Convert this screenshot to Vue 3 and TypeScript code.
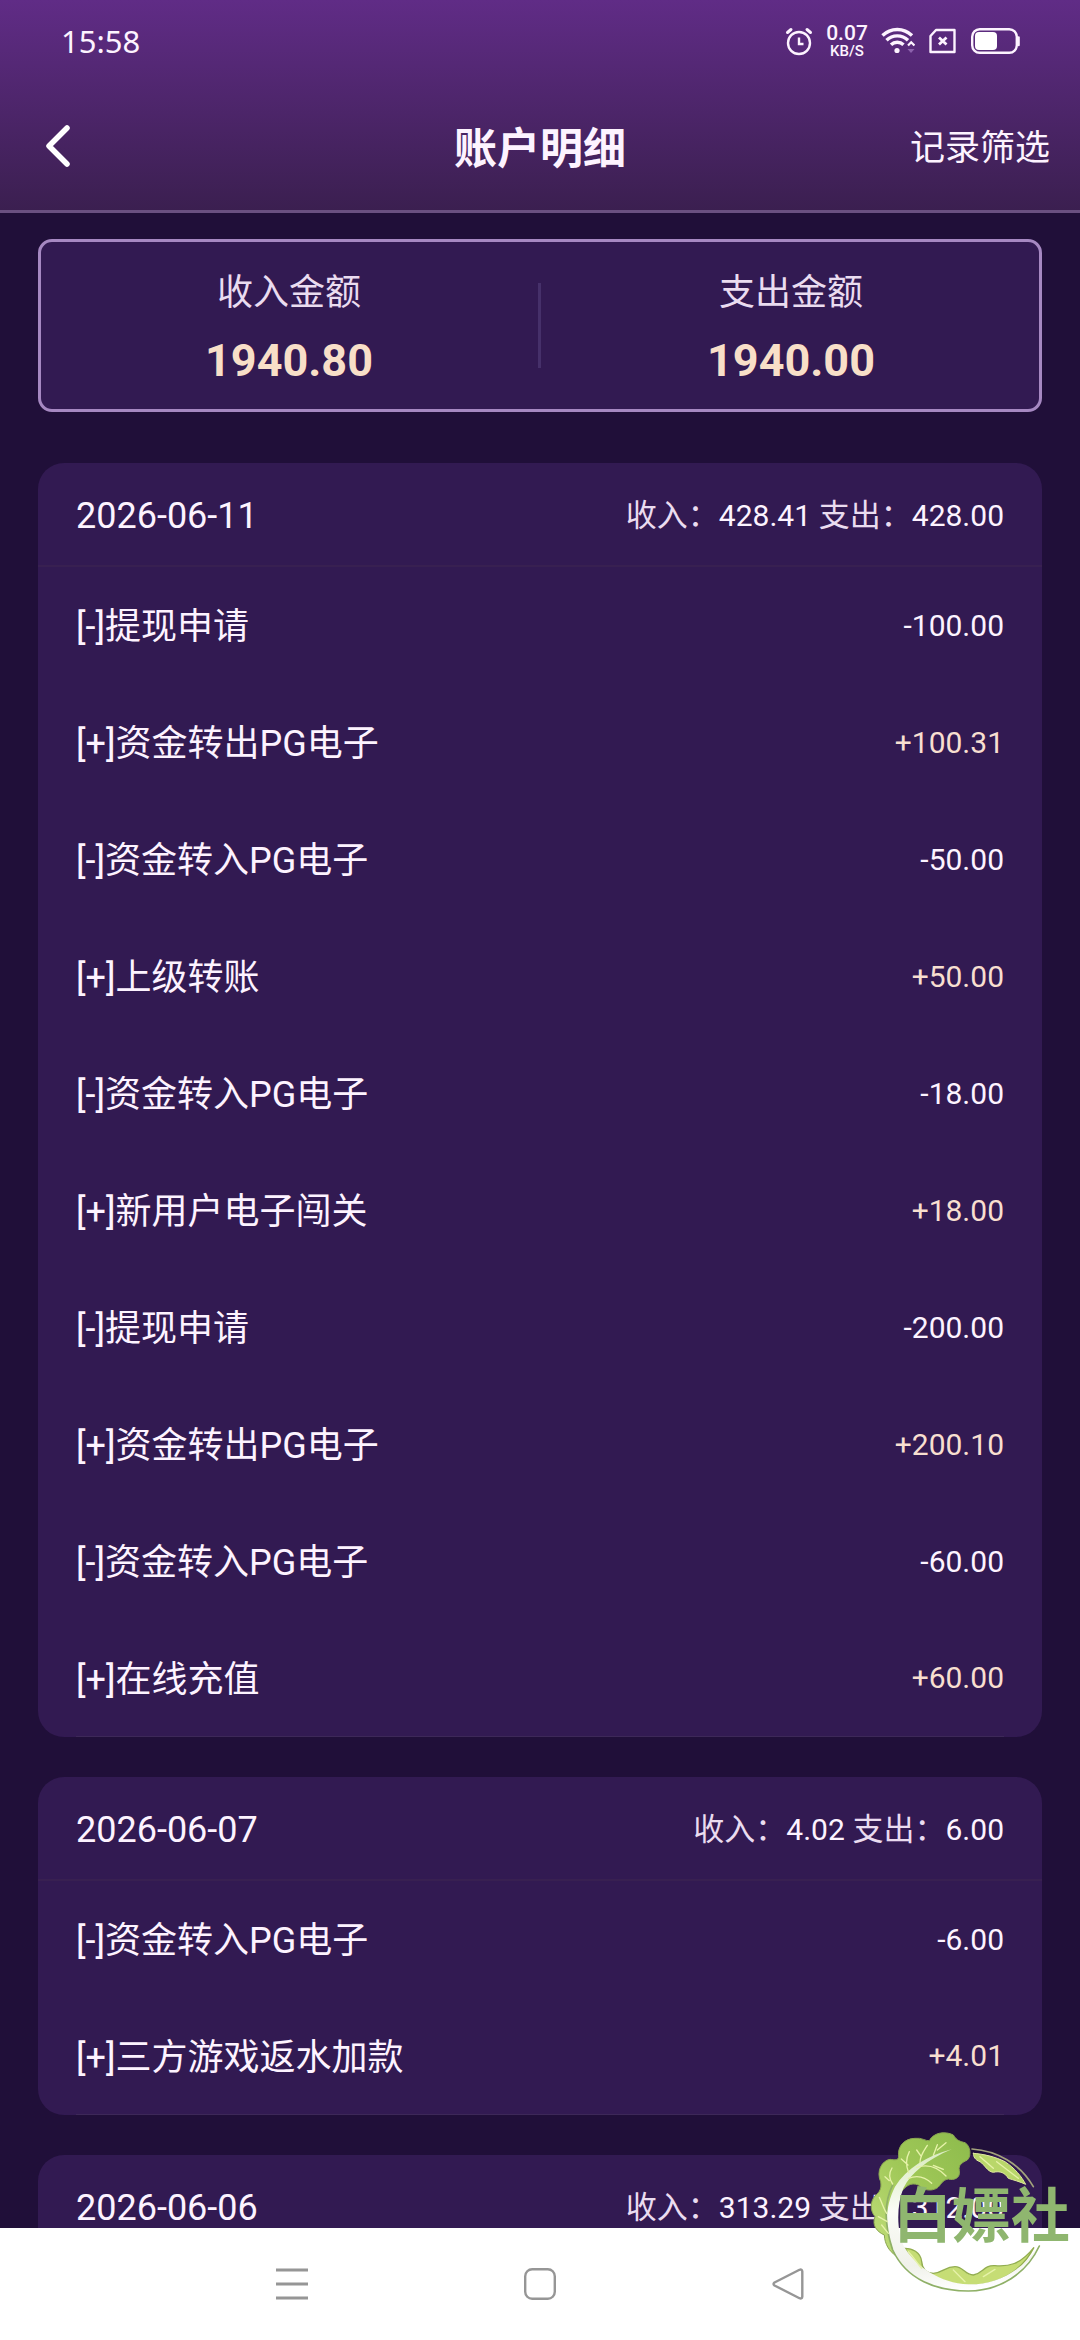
<script setup lang="ts">
interface Entry {
  title: string
  amount: string
}

interface DayGroup {
  date: string
  income: string
  expense: string
  entries: Entry[]
}

const totals = [
  { label: '收入金额', value: '1940.80' },
  { label: '支出金额', value: '1940.00' },
]

const days: DayGroup[] = [
  {
    date: '2026-06-11',
    income: '428.41',
    expense: '428.00',
    entries: [
      { title: '[-]提现申请', amount: '-100.00' },
      { title: '[+]资金转出PG电子', amount: '+100.31' },
      { title: '[-]资金转入PG电子', amount: '-50.00' },
      { title: '[+]上级转账', amount: '+50.00' },
      { title: '[-]资金转入PG电子', amount: '-18.00' },
      { title: '[+]新用户电子闯关', amount: '+18.00' },
      { title: '[-]提现申请', amount: '-200.00' },
      { title: '[+]资金转出PG电子', amount: '+200.10' },
      { title: '[-]资金转入PG电子', amount: '-60.00' },
      { title: '[+]在线充值', amount: '+60.00' },
    ],
  },
  {
    date: '2026-06-07',
    income: '4.02',
    expense: '6.00',
    entries: [
      { title: '[-]资金转入PG电子', amount: '-6.00' },
      { title: '[+]三方游戏返水加款', amount: '+4.01' },
    ],
  },
  { date: '2026-06-06', income: '313.29', expense: '312.00', entries: [] },
]
</script>

<template>
  <div class="screen">
    <header class="top">
      <div class="status">
        <span class="clock">15:58</span>
        <div class="indicators">
          <svg width="28" height="30" viewBox="0 0 28 30" fill="none" stroke="#fdf3ff" stroke-width="2.4" stroke-linecap="round">
            <circle cx="14" cy="17" r="11" />
            <path d="M14 11.500v6.500h4.500" stroke-linecap="butt" />
            <path d="M2.500 6.500 6 3.500M25.500 6.500 22 3.500" stroke-width="3" />
          </svg>
          <span class="speed"><b>0.07</b><small>KB/S</small></span>
          <svg width="34" height="28" viewBox="0 0 34 28" fill="none" stroke="#fdf3ff" stroke-width="3.400">
            <path d="M1.500 8.500a21 21 0 0 1 29.500 0" />
            <path d="M5.500 13.200a15.500 15.500 0 0 1 21.500 0" />
            <path d="M10 17.800a9 9 0 0 1 12.500 0" />
            <circle cx="16" cy="23.500" r="2.600" fill="#fdf3ff" stroke="none" />
            <path d="M27 18.500l3.200-3.200 3.200 3.200" stroke-width="2.200" />
            <path d="M26.500 22h7l-3.500 4z" fill="#8d62ad" stroke="none" />
          </svg>
          <svg width="28" height="26" viewBox="0 0 28 26" fill="none" stroke="#fdf3ff" stroke-width="2.400">
            <path d="M7 2h18.500v22h-24V8z" stroke-linejoin="round" />
            <path d="M10 9.500l7.500 7M17.500 9.500l-7.500 7" stroke-width="2.800" />
          </svg>
          <svg width="50" height="26" viewBox="0 0 50 26" fill="none">
            <rect x="1.200" y="1.200" width="44.600" height="23.600" rx="7.500" stroke="#fdf3ff" stroke-width="2.400" />
            <rect x="4" y="4" width="22" height="18" rx="4" fill="#fff" />
            <path d="M47.500 9.500v7.500" stroke="#fdf3ff" stroke-width="2.600" stroke-linecap="round" />
          </svg>
        </div>
      </div>
      <div class="titlebar">
        <button class="back" type="button" aria-label="返回">
          <svg width="28" height="44" viewBox="0 0 28 44" fill="none" stroke="#fff" stroke-width="5.500" stroke-linecap="round" stroke-linejoin="round">
            <path d="M23 4 5 22l18 18" />
          </svg>
        </button>
        <h1>账户明细</h1>
        <button class="filter" type="button">记录筛选</button>
      </div>
    </header>

    <main class="content">
      <section class="summary">
        <div v-for="item in totals" :key="item.label" class="total">
          <span class="total-label">{{ item.label }}</span>
          <strong class="total-value">{{ item.value }}</strong>
        </div>
      </section>

      <section v-for="day in days" :key="day.date" class="day">
        <div class="day-head">
          <h2>{{ day.date }}</h2>
          <p>收入：<span>{{ day.income }}</span> 支出：<span>{{ day.expense }}</span></p>
        </div>
        <ul v-if="day.entries.length">
          <li v-for="(entry, i) in day.entries" :key="i">
            <span class="entry-title">{{ entry.title }}</span>
            <span class="amount" :class="{ plus: entry.amount.startsWith('+') }">{{ entry.amount }}</span>
          </li>
        </ul>
      </section>
    </main>

    <nav class="keys">
      <button type="button" aria-label="任务">
        <svg width="32" height="32" viewBox="0 0 32 32" stroke="#969696" stroke-width="2.800">
          <path d="M0 2h32M0 16h32M0 30h32" />
        </svg>
      </button>
      <button type="button" aria-label="主页">
        <svg width="32" height="32" viewBox="0 0 32 32" fill="none" stroke="#969696" stroke-width="2.400">
          <rect x="1.200" y="1.200" width="29.600" height="29.600" rx="7" />
        </svg>
      </button>
      <button type="button" aria-label="后退">
        <svg width="32" height="32" viewBox="0 0 32 32" fill="none" stroke="#969696" stroke-width="2.400" stroke-linejoin="round">
          <path d="M27.500 1.800 2.500 14.500q-2 1.500 0 3L27.500 30.200q2.500 1 2.800-1.700v-25q-.3-2.700-2.800-1.700z" />
        </svg>
      </button>
    </nav>

    <div class="badge">
      <svg viewBox="0 0 720 690" fill="none" stroke-linecap="round">
        <defs>
          <linearGradient id="leaf" x1="1" y1="0" x2="0" y2="1">
            <stop offset="0" stop-color="#8dbb4c" />
            <stop offset=".5" stop-color="#a0c858" />
            <stop offset="1" stop-color="#c3df7c" />
          </linearGradient>
          <linearGradient id="stem" x1=".4" y1="0" x2=".5" y2="1">
            <stop offset="0" stop-color="#d9ebc0" />
            <stop offset=".4" stop-color="#fafcf6" />
            <stop offset=".8" stop-color="#f0f1ea" />
            <stop offset="1" stop-color="#ffffff" />
          </linearGradient>
        </defs>
        <path d="M165 435C148 424 134 402 133 375 110 365 95 345 105 320 88 300 92 272 105 258 120 245 125 235 122 215 108 185 125 152 150 148 165 150 176 152 176 138 172 108 195 85 225 85 245 82 258 94 268 92 280 68 315 62 340 75 350 92 362 95 375 98 392 108 395 138 382 150 366 158 354 165 358 182 362 205 340 212 325 207 305 210 302 228 290 235 270 245 250 240 235 225 212 215 195 230 180 250 158 290 150 350 165 435Z" fill="url(#leaf)" stroke="#8aa552" stroke-width="3" />
        <path d="M195 415C215 415 242 425 245 455 247 480 260 490 280 490 310 488 315 470 345 470 370 470 375 495 400 495 430 490 430 465 465 467 505 470 540 465 582 412 545 485 470 528 385 526 300 524 225 480 195 415Z" fill="#c6dd75" stroke="#92ad50" stroke-width="4" />
        <path d="M335 118C260 138 200 175 165 230 135 290 133 350 160 422 200 505 290 540 380 540 470 540 545 500 595 410 540 490 460 525 385 523 300 520 230 470 195 415 170 370 168 290 190 235 212 190 260 150 335 118Z" fill="url(#stem)" />
        <path d="M158 225C130 280 135 350 158 420 200 510 290 543 385 543 480 543 560 490 598 408" stroke="#8fb067" stroke-width="5" />
        <path d="M400 130C430 132 465 140 495 155 525 175 545 200 557 223 540 215 520 210 505 205 495 188 480 182 460 187 442 185 435 165 420 155 405 150 400 140 400 130Z" fill="#b9d76a" stroke="#e0e8a0" stroke-width="3" />
        <path d="M396 117C470 122 540 160 580 230" stroke="#a3a37c" stroke-width="5" />
        <g stroke="#e6f2a9" stroke-width="4">
          <path d="M206 188C196 165 198 145 208 125M204 165 184 147M240 158C240 135 255 118 262 106M244 140 230 120M280 136 292 104M292 120 318 98M230 172C260 162 290 168 318 198M280 166 310 178M205 205C230 195 255 200 275 220M158 222C146 205 146 190 156 174M148 212 135 200M140 310C130 295 125 275 118 262M142 335 115 320M145 370 125 345" />
          <path d="M420 140 460 175M470 155 535 205M340 480 375 515M430 500 465 478M205 425C225 445 230 460 245 475" />
        </g>
      </svg>
      <span>白嫖社</span>
    </div>
  </div>
</template>

<style>
body {
  margin: 0;
  background: #200f39;
}
</style>

<style scoped>
* {
  box-sizing: border-box;
}

.screen {
  position: relative;
  display: flex;
  flex-direction: column;
  height: 100vh;
  overflow: hidden;
  background: #200f39;
  color: #fdf3ff;
  font-family: Roboto, "Noto Sans CJK SC", sans-serif;
  font-size: 36px;
}

svg {
  display: block;
}

button {
  padding: 0;
  border: 0;
  background: none;
  color: inherit;
  font: inherit;
}

h1,
h2,
p,
ul {
  margin: 0;
  padding: 0;
  font-weight: 400;
}

.top {
  flex: none;
  border-bottom: 3px solid #6a5081;
  background: linear-gradient(#602c86, #3b1f50);
  background-clip: padding-box;
}

.status {
  display: flex;
  align-items: center;
  justify-content: space-between;
  height: 82px;
  padding: 0 59px 0 61px;
}

.clock {
  font-family: "Noto Sans", sans-serif;
  font-size: 31px;
  line-height: 40px;
}

.indicators {
  display: flex;
  align-items: center;
  gap: 14px;
}

.speed {
  display: flex;
  flex-direction: column;
  align-items: center;
  width: 40px;
}

.speed b {
  font-size: 21px;
  font-weight: 500;
  line-height: 20px;
}

.speed small {
  font-size: 15px;
  font-weight: 500;
  line-height: 16px;
}

.titlebar {
  display: grid;
  grid-template-columns: 1fr auto 1fr;
  align-items: center;
  height: 128px;
  padding: 0 30px;
}

.back {
  justify-self: start;
  padding-left: 14px;
}

h1 {
  padding-top: 6px;
  font-size: 43px;
  font-weight: 700;
  line-height: 60px;
}

.filter {
  justify-self: end;
  padding-top: 6px;
  font-size: 35px;
  line-height: 50px;
}

.content {
  flex: 1;
  min-height: 0;
  padding: 26px 38px 0;
  overflow-y: auto;
  scrollbar-width: none;
}

.summary {
  display: flex;
  align-items: center;
  gap: 6px;
  margin-bottom: 51px;
  padding: 24px 0 18px;
  border: 3px solid #a688c2;
  border-radius: 14px;
  background: #321a52;
}

.total {
  position: relative;
  display: flex;
  flex: 1;
  flex-direction: column;
  align-items: center;
  gap: 11px;
}

.total + .total::before {
  position: absolute;
  top: 17px;
  bottom: 23px;
  left: -5px;
  width: 3px;
  background: #46306a;
  content: "";
}

.total-label {
  color: #eadcf0;
  line-height: 54px;
}

.total-value {
  color: #f8dfc8;
  font-size: 45px;
  font-weight: 700;
  line-height: 60px;
}

.day {
  margin-bottom: 40px;
  overflow: hidden;
  border-radius: 26px;
  background: #321a52;
}

.day-head {
  display: flex;
  align-items: center;
  justify-content: space-between;
  height: 104px;
  padding: 4px 38px 0;
  border-bottom: 2px solid #382051;
}

h2 {
  font-size: 36px;
  line-height: 50px;
}

p {
  color: #eadcf0;
  font-size: 31px;
  line-height: 50px;
}

p span {
  color: #fdf3ff;
  font-size: 30px;
}

ul {
  list-style: none;
}

li {
  display: flex;
  align-items: center;
  justify-content: space-between;
  height: 117px;
  margin: 0 38px;
}

li:last-child {
  border-bottom: 1px solid #3d2858;
}

.entry-title {
  padding-top: 3px;
  line-height: 50px;
}

.amount {
  font-size: 30px;
  line-height: 50px;
}

.plus {
  color: #f8dfd0;
}

.keys {
  display: flex;
  flex: none;
  justify-content: center;
  height: 112px;
  background: #fff;
}

.keys button {
  display: flex;
  align-items: center;
  justify-content: center;
  width: 23%;
}

.badge {
  position: absolute;
  right: 0;
  bottom: 0;
  width: 240px;
  height: 230px;
  pointer-events: none;
}

.badge span {
  position: absolute;
  top: 72px;
  right: 10px;
  color: #8fb66f;
  font-size: 59px;
  font-weight: 700;
  line-height: 70px;
  white-space: nowrap;
}
</style>
